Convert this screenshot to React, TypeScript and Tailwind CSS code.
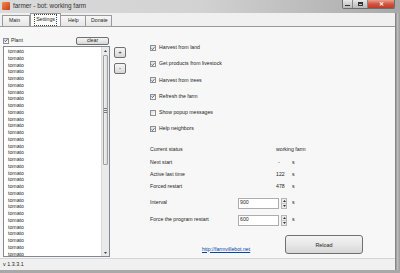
import React from "react";

const font = "font-['Liberation_Sans',Arial,sans-serif]";

const Check = ({ on }: { on?: boolean }) => (
  <span className="w-[6px] h-[6px] border border-[#8f8f8f] bg-linear-to-br from-[#dcdcdc] to-white flex items-center justify-center shrink-0">
    {on && (
      <svg width="5" height="5" viewBox="0 0 5 5">
        <path d="M0.7 2.5 L1.9 3.8 L4.3 0.9" stroke="#253a78" strokeWidth="1" fill="none" />
      </svg>
    )}
  </span>
);

const Spinner = () => (
  <div className="ml-[2px] w-[6px] h-[11px] flex flex-col border border-[#b5b5b5] bg-[#ececec]">
    <div className="flex-1 flex items-center justify-center border-b border-[#c8c8c8]">
      <svg width="3" height="2" viewBox="0 0 3 2"><path d="M0 2 L1.5 0 L3 2Z" fill="#333" /></svg>
    </div>
    <div className="flex-1 flex items-center justify-center">
      <svg width="3" height="2" viewBox="0 0 3 2"><path d="M0 0 L1.5 2 L3 0Z" fill="#333" /></svg>
    </div>
  </div>
);

const options = [
  { label: "Harvest from land", on: true },
  { label: "Get products from livestock", on: true },
  { label: "Harvest from trees", on: true },
  { label: "Refresh the farm", on: true },
  { label: "Show popup messages", on: false },
  { label: "Help neighbors", on: true },
];

const status = [
  { label: "Current status", value: "working farm", unit: "" },
  { label: "Next start", value: "-", unit: "s" },
  { label: "Active last time", value: "122", unit: "s" },
  { label: "Forced restart", value: "478", unit: "s" },
];

const btn =
  "border border-[#707070] rounded-[2px] bg-linear-to-b from-[#f4f4f4] via-[#e8e8e8] to-[#d6d6d6] flex items-center justify-center text-[#1e1e1e]";

export default function App() {
  const plants = Array.from({ length: 31 }, () => "tomato");
  return (
    <div className={`w-[400px] h-[273px] flex flex-col bg-[#bdbdbd] text-[#1e1e1e] ${font}`}>
      {/* title bar */}
      <div className="h-[13px] flex items-start bg-linear-to-r from-[#dadada] via-[#d2d2d2] to-[#a9a9a9] shrink-0">
        <div className="ml-[2px] mt-[2px] w-[8px] h-[8px] rounded-[1px] bg-linear-to-br from-[#f08a4a] to-[#c8361c]" />
        <span className="ml-[3px] mt-[2px] text-[6.4px] leading-[8px] text-[#333]">farmer - bot: working farm</span>
        <div className="ml-auto mr-[5px] flex h-[9px] border border-t-0 border-[#6d6d6d] rounded-b-[2px] overflow-hidden">
          <div className="w-[10px] bg-linear-to-b from-[#e8e8e8] to-[#b9b9b9] flex items-end justify-center pb-[2px] border-r border-[#888]">
            <div className="w-[5px] h-[1px] bg-[#333]" />
          </div>
          <div className="w-[15px] bg-linear-to-b from-[#e8e8e8] to-[#b9b9b9] flex items-center justify-center border-r border-[#888]">
            <div className="w-[5px] h-[4px] border border-[#333] border-t-2" />
          </div>
          <div className="w-[26px] bg-linear-to-b from-[#e8a08f] via-[#d2553e] to-[#c23a23] flex items-center justify-center">
            <span className="text-white text-[6px] leading-none font-bold">✕</span>
          </div>
        </div>
      </div>

      <div className="flex flex-1">
        <div className="w-[395px] flex flex-col bg-[#f0f0f0]">
          {/* tabs */}
          <div className="h-[13px] flex items-end pl-[2px] shrink-0">
            <div className="h-[11px] w-[28px] border border-b-0 border-[#9a9a9a] bg-linear-to-b from-[#f7f7f7] to-[#e6e6e6] text-[5.2px] flex items-center pl-[6px]">Main</div>
            <div className="h-[13px] w-[31px] border border-b-0 border-[#9a9a9a] bg-[#fbfbfb] text-[5.2px] flex items-center justify-center">
              <span className="border border-dotted border-[#444] px-[1px] py-[1px]">Settings</span>
            </div>
            <div className="h-[11px] w-[25px] border border-b-0 border-l-0 border-[#9a9a9a] bg-linear-to-b from-[#f7f7f7] to-[#e6e6e6] text-[5.2px] flex items-center pl-[7px]">Help</div>
            <div className="h-[11px] w-[26px] border border-b-0 border-l-0 border-[#9a9a9a] bg-linear-to-b from-[#f7f7f7] to-[#e6e6e6] text-[5.2px] flex items-center pl-[5px]">Donate</div>
          </div>

          {/* panel */}
          <div className="h-[232px] border-t border-[#9a9a9a] bg-[#f7f7f7] flex text-[5.2px] shrink-0">
            {/* left column */}
            <div className="ml-[3px] mt-[9px] w-[107px] flex flex-col">
              <div className="h-[9px] flex items-center">
                <Check on />
                <span className="ml-[2px]">Plant</span>
                <div className={`${btn} ml-auto mr-[1px] w-[33px] h-[8px]`}>clear</div>
              </div>
              <div className="mt-[1px] h-[211px] border border-[#828790] bg-white flex">
                <div className="flex-1 pl-[4px] pt-[1px] overflow-hidden">
                  {plants.map((p, i) => (
                    <div key={i} className="leading-[6.75px]">{p}</div>
                  ))}
                </div>
                <div className="w-[8px] bg-[#eaeaea] border-l border-[#dadada] flex flex-col">
                  <div className="h-[7px] flex items-center justify-center">
                    <svg width="3" height="2" viewBox="0 0 3 2"><path d="M0 2 L1.5 0 L3 2Z" fill="#444" /></svg>
                  </div>
                  <div className="mt-[1px] h-[110px] mx-[1px] border border-[#a0a0a0] rounded-[1px] bg-linear-to-r from-[#f2f2f2] to-[#dcdcdc] flex flex-col items-center justify-center gap-[1px]">
                    <div className="w-[3px] h-[1px] bg-[#777]" />
                    <div className="w-[3px] h-[1px] bg-[#777]" />
                    <div className="w-[3px] h-[1px] bg-[#777]" />
                  </div>
                  <div className="mt-auto h-[7px] flex items-center justify-center">
                    <svg width="3" height="2" viewBox="0 0 3 2"><path d="M0 0 L1.5 2 L3 0Z" fill="#444" /></svg>
                  </div>
                </div>
              </div>
            </div>

            {/* +/- */}
            <div className="ml-[4px] mt-[20px] flex flex-col">
              <div className={`${btn} w-[12px] h-[11px] text-[6px]`}>+</div>
              <div className={`${btn} mt-[5px] w-[12px] h-[11px] text-[6px]`}>-</div>
            </div>

            {/* settings */}
            <div className="ml-[24px] mt-[13px] flex flex-col w-[200px]">
              {options.map((o) => (
                <div key={o.label} className="h-[16.2px] flex items-center">
                  <Check on={o.on} />
                  <span className="ml-[3px]">{o.label}</span>
                </div>
              ))}

              <div className="mt-[7px] flex flex-col">
                {status.map((s) => (
                  <div key={s.label} className="h-[12.3px] flex items-center whitespace-nowrap">
                    <span className="w-[126px] shrink-0">{s.label}</span>
                    <span className={s.value === "-" ? "w-[16px] pl-[2px] shrink-0" : "w-[16px] shrink-0"}>{s.value}</span>
                    <span>{s.unit}</span>
                  </div>
                ))}
              </div>

              <div className="mt-[4px] h-[12px] flex items-center">
                <span className="w-[88px]">Interval</span>
                <div className="w-[41px] h-[11px] border border-[#abadb3] bg-white flex items-center pl-[1px]">900</div>
                <Spinner />
                <span className="ml-[5px]">s</span>
              </div>
              <div className="mt-[5px] h-[12px] flex items-center">
                <span className="w-[88px]">Force the program restart</span>
                <div className="w-[41px] h-[11px] border border-[#abadb3] bg-white flex items-center pl-[1px]">600</div>
                <Spinner />
                <span className="ml-[5px]">s</span>
              </div>

              <div className="mt-[9px] flex items-end">
                <a className="ml-[52px] mb-[1px] text-[#0645ad] underline whitespace-nowrap">http://farmvillebot.net</a>
                <div className={`${btn} ml-auto -mr-[13px] w-[78px] h-[19px] rounded-[3px] text-[5.4px]`}>Reload</div>
              </div>
            </div>
          </div>

          {/* status bar */}
          <div className="h-[12px] border-t border-[#d5d5d5] bg-[#f0f0f0] flex items-center pl-[3px] text-[5.4px] shrink-0">
            v 1.3.3.1
          </div>
        </div>
        <div className="flex-1 bg-linear-to-r from-[#7a7a7a] via-[#bdbdbd] to-[#9c9c9c]" />
      </div>
      <div className="h-[3px] bg-[#a8a8a8] shrink-0" />
    </div>
  );
}
